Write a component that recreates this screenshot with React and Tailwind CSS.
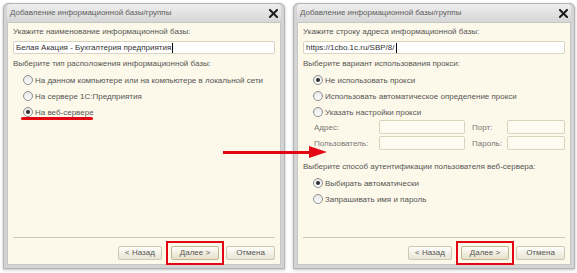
import React from "react";

function CloseIcon() {
  return (
    <svg width="9" height="9" viewBox="0 0 9 9">
      <path d="M1 1 L8 8 M8 1 L1 8" stroke="#1e1e1e" strokeWidth="2" strokeLinecap="square" />
    </svg>
  );
}

function Radio({ checked, label, underline }) {
  return (
    <div className="relative flex h-[16px] items-center whitespace-nowrap">
      <span className="flex h-[10px] w-[10px] items-center justify-center rounded-full border border-[#8e8e8e] bg-gradient-to-b from-[#e6e6e6] to-[#ffffff]">
        {checked && <span className="h-[4px] w-[4px] rounded-full bg-[#2e2e2e]" />}
      </span>
      <span className="ml-[2px]">{label}</span>
      {underline && (
        <span className="absolute left-[-2px] top-[13px] h-[3px] w-[72px] rounded-full bg-[#e30613]" />
      )}
    </div>
  );
}

function Field({ className }) {
  return <div className={"h-[14px] rounded-[2px] border border-[#d9d4bd] bg-[#fdfbf2] " + className} />;
}

function Footer() {
  return (
    <div className="mt-auto">
      <div className="h-px bg-[#cfcab6]" />
      <div className="mt-[8px] flex justify-end pb-[4px]">
        <button className="h-[14px] w-[44px] rounded-[2px] border border-[#cdc8b2] bg-gradient-to-b from-[#fdfdfb] to-[#e9e5d3] text-[8px] leading-[12px] text-[#555]">
          &lt; Назад
        </button>
        <div className="relative ml-[9px]">
          <button className="h-[14px] w-[48px] rounded-[2px] border border-[#bdb69a] bg-gradient-to-b from-[#fdfdfb] to-[#e6e0c6] text-[8px] leading-[12px] text-[#555]">
            Далее &gt;
          </button>
          <span className="absolute -bottom-[5px] -left-[5px] -right-[5px] -top-[5px] border-2 border-[#e30613]" />
        </div>
        <button className="ml-[7px] h-[14px] w-[49px] rounded-[2px] border border-[#cdc8b2] bg-gradient-to-b from-[#fdfdfb] to-[#e9e5d3] text-[8px] leading-[12px] text-[#555]">
          Отмена
        </button>
      </div>
    </div>
  );
}

function Dialog({ children }) {
  return (
    <div className="flex h-[266px] w-[282px] flex-col rounded-t-[5px] border border-[#b4b4b4] bg-[#d4d4d4] px-[3px] pb-[3px] shadow-[0_1px_3px_rgba(0,0,0,0.25)]">
      <div className="flex h-[18px] shrink-0 items-center justify-between rounded-t-[4px] bg-gradient-to-b from-[#efefef] to-[#d6d6d6] pl-[3px] pr-[3px]">
        <span className="text-[8px] text-[#606060]">Добавление информационной базы/группы</span>
        <CloseIcon />
      </div>
      <div className="flex flex-1 flex-col border border-[#c6c6c6] bg-[#fdf9ea] px-[5px] pt-[3px] text-[8px] leading-[11px] text-[#555]">
        {children}
      </div>
    </div>
  );
}

export default function App() {
  return (
    <div
      className="relative flex h-[273px] w-[577px] gap-[8px] bg-white pl-[3px] pt-[3px]"
      style={{ fontFamily: '"Liberation Sans", Arial, sans-serif' }}
    >
      <Dialog>
        <div>Укажите наименование информационной базы:</div>
        <div className="mt-[4px] flex h-[13px] items-center rounded-[2px] border border-[#d9d4bd] bg-white px-[2px] text-[#333]">
          Белая Акация - Бухгалтерия предприятия<span className="ml-px h-[10px] w-px bg-black" />
        </div>
        <div className="mt-[4px]">Выберите тип расположения информационной базы:</div>
        <div className="mt-[3px] pl-[10px]">
          <Radio label="На данном компьютере или на компьютере в локальной сети" />
          <Radio label="На сервере 1С:Предприятия" />
          <Radio checked underline label="На веб-сервере" />
        </div>
        <Footer />
      </Dialog>

      <Dialog>
        <div>Укажите строку адреса информационной базы:</div>
        <div className="mt-[4px] flex h-[13px] items-center rounded-[2px] border border-[#d9d4bd] bg-white px-[2px] text-[#333]">
          https://1cbo.1c.ru/SBP/8/<span className="ml-px h-[10px] w-px bg-black" />
        </div>
        <div className="mt-[4px]">Выберите вариант использования прокси:</div>
        <div className="mt-[3px] pl-[10px]">
          <Radio checked label="Не использовать прокси" />
          <Radio label="Использовать автоматическое определение прокси" />
          <Radio label="Указать настройки прокси" />
        </div>
        <div className="grid grid-cols-[65px_86px_42px_1fr] items-center gap-y-[2px] pl-[11px] text-[#777]">
          <span>Адрес:</span>
          <Field className="w-[86px]" />
          <span className="pl-[7px]">Порт:</span>
          <Field />
          <span>Пользователь:</span>
          <Field className="w-[86px]" />
          <span className="pl-[7px]">Пароль:</span>
          <Field />
        </div>
        <div className="mt-[11px]">Выберите способ аутентификации пользователя веб-сервера:</div>
        <div className="mt-[3px] pl-[10px]">
          <Radio checked label="Выбирать автоматически" />
          <Radio label="Запрашивать имя и пароль" />
        </div>
        <Footer />
      </Dialog>

      <div className="absolute left-[223px] top-[146px] flex items-center">
        <span className="h-[3px] w-[86px] bg-[#e30613]" />
        <span className="h-0 w-0 border-y-[6px] border-l-[18px] border-y-transparent border-l-[#e30613]" />
      </div>
    </div>
  );
}
